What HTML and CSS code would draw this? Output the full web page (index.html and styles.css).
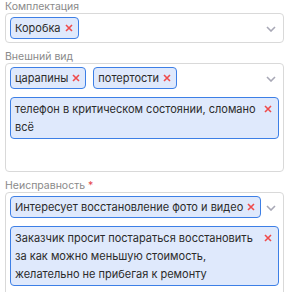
FILE: index.html
```html
<!DOCTYPE html>
<html lang="ru">
<head>
    <meta charset="UTF-8">
    <title>Форма</title>
    <link rel="stylesheet" href="styles.css">
</head>
<body>

    <!-- Комплектация -->
    <div class="field">
        <div class="field-label">Комплектация</div>
        <div class="select-box">
            <div class="tags">
                <span class="tag">Коробка <svg class="remove" viewBox="0 0 8 8"><path d="M1 1L7 7M7 1L1 7"/></svg></span>
            </div>
            <svg class="chevron" viewBox="0 0 10 6"><path d="M1 1L5 5L9 1"/></svg>
        </div>
    </div>

    <!-- Внешний вид -->
    <div class="field">
        <div class="field-label">Внешний вид</div>
        <div class="select-box">
            <div class="tags">
                <span class="tag">царапины <svg class="remove" viewBox="0 0 8 8"><path d="M1 1L7 7M7 1L1 7"/></svg></span>
                <span class="tag">потертости <svg class="remove" viewBox="0 0 8 8"><path d="M1 1L7 7M7 1L1 7"/></svg></span>
            </div>
            <svg class="chevron" viewBox="0 0 10 6"><path d="M1 1L5 5L9 1"/></svg>
            <div class="note-tag">
                <span class="note-text">телефон в критическом состоянии, сломано всё</span>
                <svg class="remove" viewBox="0 0 8 8"><path d="M1 1L7 7M7 1L1 7"/></svg>
            </div>
            <div class="input-line"></div>
        </div>
    </div>

    <!-- Неисправность -->
    <div class="field">
        <div class="field-label">Неисправность <span class="required">*</span></div>
        <div class="select-box">
            <div class="tags">
                <span class="tag">Интересует восстановление фото и видео <svg class="remove" viewBox="0 0 8 8"><path d="M1 1L7 7M7 1L1 7"/></svg></span>
            </div>
            <svg class="chevron" viewBox="0 0 10 6"><path d="M1 1L5 5L9 1"/></svg>
            <div class="note-tag">
                <span class="note-text">Заказчик просит постараться восстановить за как можно меньшую стоимость, желательно не прибегая к ремонту</span>
                <svg class="remove" viewBox="0 0 8 8"><path d="M1 1L7 7M7 1L1 7"/></svg>
            </div>
            <div class="input-line"></div>
        </div>
    </div>

</body>
</html>
```

FILE: styles.css
```css
/* General */
body {
    margin: 0;
    padding: 0 8px 0 5px;
    background: #fff;
    font-family: Inter, "Noto Sans", sans-serif;
    color: #2b2b2b;
}

.field {
    margin-bottom: 7px;
}

.field-label {
    font-size: 10.5px;
    line-height: 13px;
    color: #8a8a8a;
}

.required {
    color: #e5484d;
}

/* Select box */
.select-box {
    display: grid;
    grid-template-columns: minmax(0, 1fr) 18px;
    row-gap: 8px;
    border: 1px solid #d9d9d9;
    border-radius: 4px;
    padding: 3px 4px;
}

.tags {
    display: flex;
    flex-wrap: wrap;
    gap: 7px;
}

.tag {
    display: inline-flex;
    align-items: center;
    gap: 4px;
    padding: 1px 5px 1px 4px;
    font-size: 11px;
    line-height: 18px;
    white-space: nowrap;
    background: #dfe9fc;
    border: 1px solid #3d7fe6;
    border-radius: 4px;
}

.remove {
    width: 8px;
    height: 8px;
    flex-shrink: 0;
}

.remove path {
    stroke: #ef4b4b;
    stroke-width: 1.6;
    fill: none;
}

.chevron {
    width: 10px;
    height: 6px;
    justify-self: end;
    margin: 9px 3px 0 0;
}

.chevron path {
    stroke: #a8a8b6;
    stroke-width: 1.6;
    fill: none;
}

/* Long text tag */
.note-tag {
    grid-column: 1 / -1;
    display: flex;
    align-items: flex-start;
    gap: 8px;
    padding: 2px 6px 2px 4px;
    font-size: 11px;
    line-height: 18px;
    background: #dfe9fc;
    border: 1px solid #3d7fe6;
    border-radius: 4px;
}

.note-text {
    flex: 1;
}

.note-tag .remove {
    margin-top: 5px;
}

.input-line {
    grid-column: 1 / -1;
    height: 21px;
}
```
